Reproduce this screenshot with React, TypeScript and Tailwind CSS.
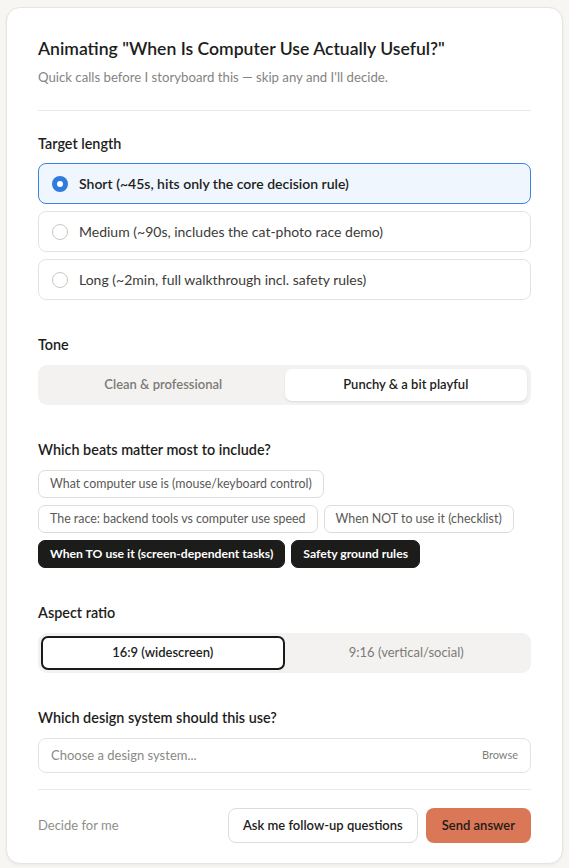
import React from "react";

const font = { fontFamily: 'Lato, "Noto Sans", sans-serif' };

function Radio({ checked }: { checked: boolean }) {
  return checked ? (
    <span className="flex h-[16px] w-[16px] shrink-0 items-center justify-center rounded-full bg-[#2f7be0]">
      <span className="h-[6px] w-[6px] rounded-full bg-white" />
    </span>
  ) : (
    <span className="h-[16px] w-[16px] shrink-0 rounded-full border-[1.5px] border-[#c9c9c6] bg-white" />
  );
}

function Option({ label, checked }: { label: string; checked?: boolean }) {
  return (
    <div
      className={
        "flex h-[41px] items-center gap-[11px] rounded-[8px] border px-[13px] " +
        (checked ? "border-[#3a82e4] bg-[#f0f6fe]" : "border-[#e3e3e0] bg-white")
      }
    >
      <Radio checked={!!checked} />
      <span className={"text-[14px] " + (checked ? "font-semibold text-[#1d1d1b]" : "text-[#3b3b38]")}>{label}</span>
    </div>
  );
}

function Chip({ label, on }: { label: string; on?: boolean }) {
  return (
    <span
      className={
        "inline-flex h-[28px] items-center rounded-[7px] border px-[11px] leading-[16px] " +
        (on
          ? "border-[#1c1c1b] bg-[#1c1c1b] text-[12.2px] font-bold text-white"
          : "border-[#dcdcd9] bg-white text-[12.4px] text-[#5a5a56]")
      }
    >
      {label}
    </span>
  );
}

function Label({ children, className = "" }: { children: React.ReactNode; className?: string }) {
  return <div className={"text-[14.4px] font-semibold leading-[20px] text-[#1d1d1b] " + className}>{children}</div>;
}

export default function App() {
  return (
    <div className="min-h-[868px] bg-[#f7f6f3] pl-[6px] pt-[7px]" style={font}>
      <div className="h-[857px] w-[557px] rounded-[14px] border border-[#e6e5e1] bg-white px-[31px] pt-[29px] shadow-[0_1px_3px_rgba(0,0,0,0.06)]">
        <h1 className="text-[17.6px] font-semibold leading-[24px] text-[#1d1d1b]">
          Animating "When Is Computer Use Actually Useful?"
        </h1>
        <p className="mt-[7px] text-[13.2px] leading-[18px] text-[#85847f]">
          Quick calls before I storyboard this — skip any and I'll decide.
        </p>
        <div className="mt-[24px] h-px bg-[#ebeae7]" />

        <Label className="mt-[23px]">Target length</Label>
        <div className="mt-[9px] flex flex-col gap-[7px]">
          <Option checked label="Short (~45s, hits only the core decision rule)" />
          <Option label="Medium (~90s, includes the cat-photo race demo)" />
          <Option label="Long (~2min, full walkthrough incl. safety rules)" />
        </div>

        <Label className="mt-[35px]">Tone</Label>
        <div className="mt-[10px] grid h-[40px] grid-cols-2 rounded-[9px] bg-[#f3f2f0] p-[4px]">
          <div className="flex items-center justify-center text-[13px] font-semibold text-[#7b7a75]">Clean &amp; professional</div>
          <div className="flex items-center justify-center rounded-[7px] bg-white text-[13px] font-semibold text-[#1d1d1b] shadow-[0_1px_2px_rgba(0,0,0,0.1)]">
            Punchy &amp; a bit playful
          </div>
        </div>

        <Label className="mt-[35px]">Which beats matter most to include?</Label>
        <div className="mt-[10px] flex flex-col gap-[7px]">
          <div className="flex gap-[6px]">
            <Chip label="What computer use is (mouse/keyboard control)" />
          </div>
          <div className="flex gap-[6px]">
            <Chip label="The race: backend tools vs computer use speed" />
            <Chip label="When NOT to use it (checklist)" />
          </div>
          <div className="flex gap-[6px]">
            <Chip on label="When TO use it (screen-dependent tasks)" />
            <Chip on label="Safety ground rules" />
          </div>
        </div>

        <Label className="mt-[35px]">Aspect ratio</Label>
        <div className="mt-[10px] grid h-[40px] grid-cols-2 rounded-[9px] bg-[#f3f2f0] p-[3px]">
          <div className="flex items-center justify-center rounded-[7px] border-2 border-[#1a1a19] bg-white text-[13px] font-semibold text-[#1d1d1b]">
            16:9 (widescreen)
          </div>
          <div className="flex items-center justify-center text-[13px] text-[#7b7a75]">9:16 (vertical/social)</div>
        </div>

        <Label className="mt-[35px]">Which design system should this use?</Label>
        <div className="mt-[10px] flex h-[35px] items-center justify-between rounded-[8px] border border-[#e3e3e0] bg-white pl-[12px] pr-[12px]">
          <span className="text-[13px] text-[#8a8985]">Choose a design system...</span>
          <span className="text-[11px] text-[#7f7e7a]">Browse</span>
        </div>

        <div className="mt-[16px] h-px bg-[#ebeae7]" />

        <div className="mt-[18px] flex items-center">
          <span className="text-[13px] text-[#8f8e89]">Decide for me</span>
          <div className="ml-auto flex gap-[8px]">
            <button className="h-[35px] rounded-[8px] border border-[#dcdcd9] bg-white px-[14px] text-[13px] font-semibold text-[#1d1d1b]">
              Ask me follow-up questions
            </button>
            <button className="h-[35px] rounded-[8px] bg-[#d97757] px-[16px] text-[13px] font-semibold text-[#1f1a17]">
              Send answer
            </button>
          </div>
        </div>
      </div>
    </div>
  );
}
